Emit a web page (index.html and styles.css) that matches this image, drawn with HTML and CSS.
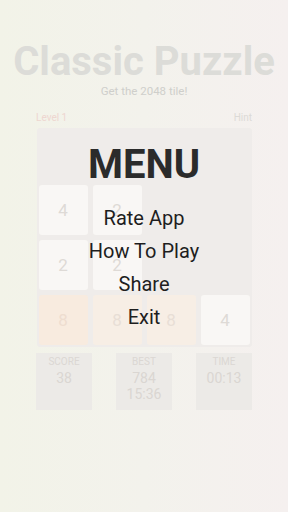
FILE: index.html
```html
<!DOCTYPE html>
<html>
<head>
<meta charset="utf-8">
<link rel="stylesheet" href="styles.css">
</head>
<body>
<div class="page">
  <h1 class="title">Classic Puzzle</h1>
  <p class="subtitle">Get the 2048 tile!</p>
  <div class="bar">
    <span class="level">Level 1</span>
    <span class="hint">Hint</span>
  </div>
  <div class="board">
    <div class="cell"></div><div class="cell"></div><div class="cell"></div><div class="cell"></div>
    <div class="tile t4">4</div><div class="tile t2">2</div><div class="cell"></div><div class="cell"></div>
    <div class="tile t2">2</div><div class="tile t2">2</div><div class="cell"></div><div class="cell"></div>
    <div class="tile t8">8</div><div class="tile t8m">8</div><div class="tile t8m">8</div><div class="tile t4">4</div>
  </div>
  <div class="stats">
    <div class="stat"><span class="lbl">SCORE</span><span class="val">38</span></div>
    <div class="stat"><span class="lbl">BEST</span><span class="val">784<br>15:36</span></div>
    <div class="stat"><span class="lbl">TIME</span><span class="val">00:13</span></div>
  </div>
</div>
<div class="menu">
  <div class="menu-title">MENU</div>
  <div class="item">Rate App</div>
  <div class="item">How To Play</div>
  <div class="item">Share</div>
  <div class="item">Exit</div>
</div>
</body>
</html>
```
FILE: styles.css
```css
html, body {
  margin: 0;
  padding: 0;
}
body {
  width: 288px;
  height: 512px;
  overflow: hidden;
  position: relative;
  font-family: Roboto, "Liberation Sans", sans-serif;
  background: linear-gradient(90deg, #f2f3e8 0%, #f3f2ec 50%, #f5f0ef 100%);
}
.page {
  display: flex;
  flex-direction: column;
  align-items: center;
  padding-top: 40px;
}
.title {
  margin: 0;
  font-size: 40px;
  font-weight: 700;
  color: #dcdcd8;
  line-height: 44px;
  letter-spacing: 0;
}
.subtitle {
  margin: 1px 0 0;
  font-size: 11.5px;
  line-height: 13px;
  color: #cfcfcb;
}
.bar {
  width: 216px;
  display: flex;
  justify-content: space-between;
  margin-top: 13px;
  font-size: 10px;
  line-height: 14px;
}
.level { color: #eed6d0; }
.hint { color: #dcdad6; }
.board {
  margin-top: 3px;
  width: 215px;
  box-sizing: border-box;
  padding: 2px;
  display: grid;
  grid-template-columns: repeat(4, 49px);
  grid-auto-rows: 50px;
  gap: 5px;
  background: #efecea;
  border-radius: 3px;
}
.cell {
  background: #efecea;
}
.tile {
  display: flex;
  align-items: center;
  justify-content: center;
  font-size: 17px;
  color: #dedad6;
  border-radius: 3px;
}
.t2, .t4 { background: #f9f7f5; }
.t8 { background: #f8ebdf; color: #eeddd0; }
.t8m { background: #f7eee5; color: #e8ded6; }
.stats {
  margin-top: 6px;
  width: 216px;
  display: flex;
  justify-content: space-between;
}
.stat {
  width: 56px;
  height: 57px;
  background: #eceae7;
  display: flex;
  flex-direction: column;
  align-items: center;
  padding-top: 3px;
  box-sizing: border-box;
}
.lbl {
  font-size: 10px;
  line-height: 12px;
  color: #dbd7d3;
}
.val {
  font-size: 14px;
  line-height: 16px;
  color: #dad6d2;
  text-align: center;
  margin-top: 2px;
}
.menu {
  position: absolute;
  left: 0;
  top: 0;
  width: 288px;
  display: flex;
  flex-direction: column;
  align-items: center;
  padding-top: 140px;
  color: #222;
}
.menu-title {
  font-size: 40px;
  font-weight: 700;
  line-height: 50px;
  color: #2b2b2b;
}
.item {
  font-size: 20px;
  line-height: 33px;
  color: #1e1e1e;
}
.menu-title + .item { margin-top: 12px; }
```
